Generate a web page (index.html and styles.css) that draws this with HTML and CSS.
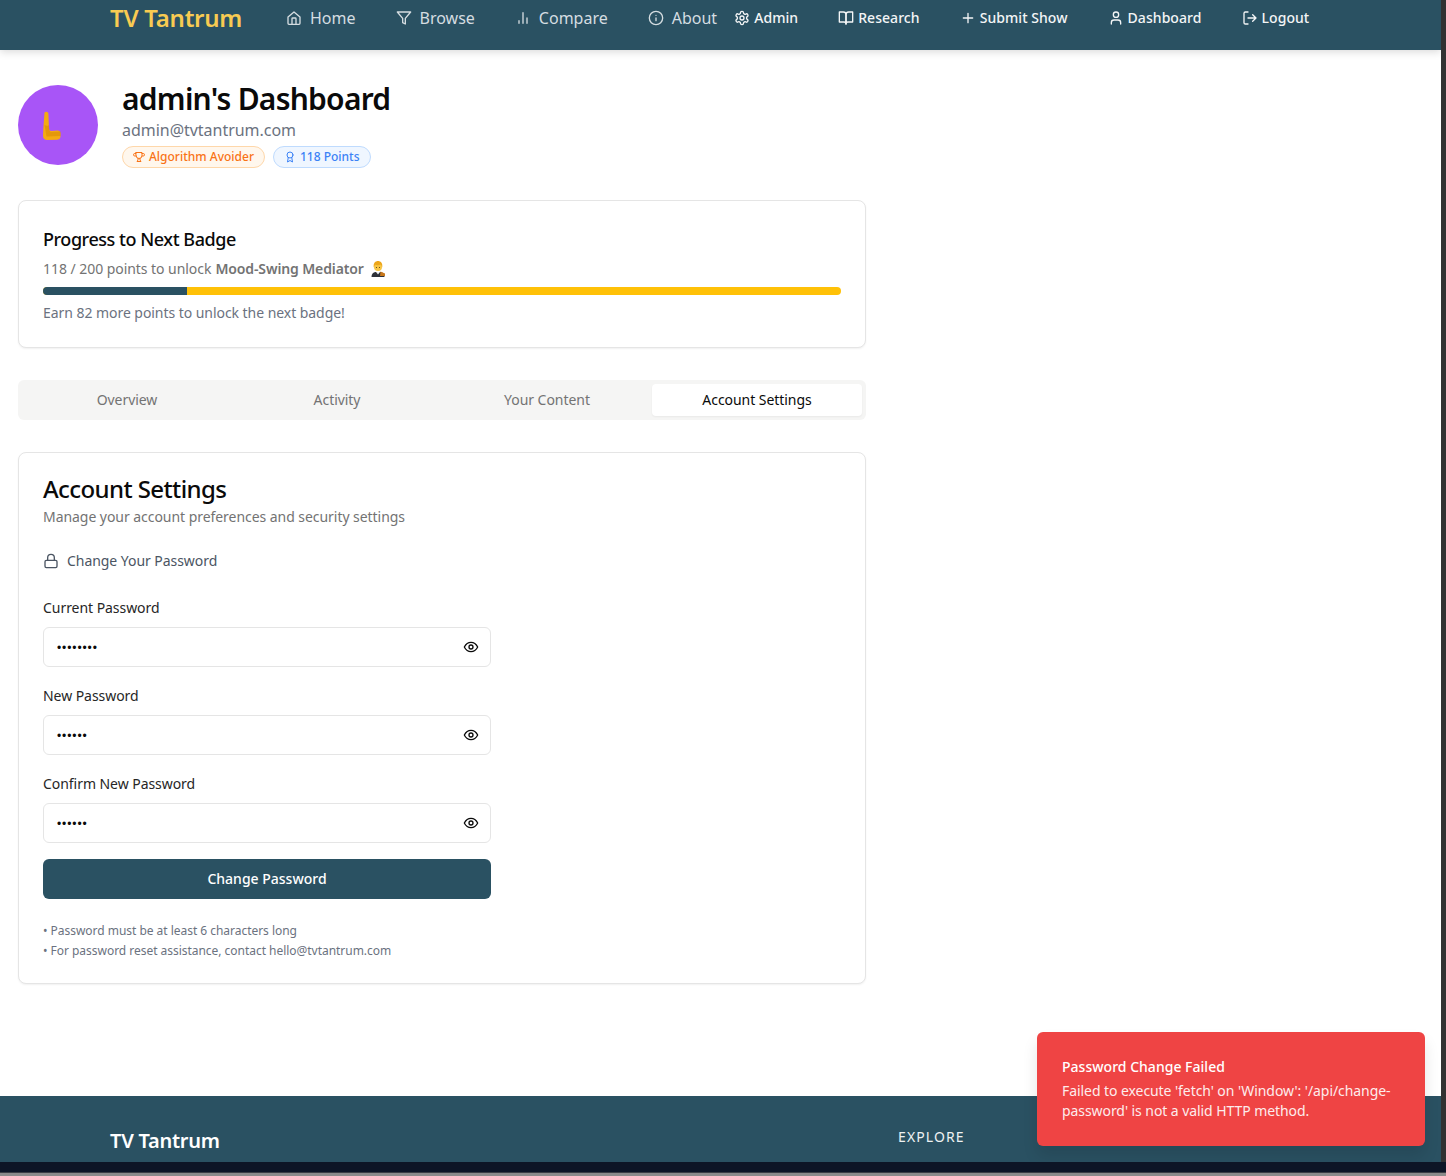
FILE: index.html
```html
<!DOCTYPE html>
<html lang="en">
<head>
  <meta charset="UTF-8">
  <title>TV Tantrum - Dashboard</title>
  <link rel="stylesheet" href="styles.css">
</head>
<body>
  <div class="screen">
    <div class="window-row">
      <div class="page">
        <!-- Top nav -->
        <nav class="navbar">
          <a class="logo">TV Tantrum</a>
          <div class="nav-main">
            <a class="nav-link"><svg class="icon" viewBox="0 0 24 24"><path d="M3 10.5 12 3l9 7.5V20a1.5 1.5 0 0 1-1.5 1.5h-15A1.5 1.5 0 0 1 3 20z"/><path d="M9 21.5V13a1 1 0 0 1 1-1h4a1 1 0 0 1 1 1v8.5"/></svg>Home</a>
            <a class="nav-link"><svg class="icon" viewBox="0 0 24 24"><path d="M22 3H2l8 9.5V19l4 2v-8.5z"/></svg>Browse</a>
            <a class="nav-link"><svg class="icon" viewBox="0 0 24 24"><path d="M12 20V4M18 20v-8M6 20v-4"/></svg>Compare</a>
            <a class="nav-link"><svg class="icon" viewBox="0 0 24 24"><circle cx="12" cy="12" r="10"/><path d="M12 16v-4M12 8h.01"/></svg>About</a>
          </div>
          <div class="nav-side">
            <a class="side-link"><svg class="icon" viewBox="0 0 24 24"><path d="M12.22 2h-.44a2 2 0 0 0-2 2v.18a2 2 0 0 1-1 1.73l-.43.25a2 2 0 0 1-2 0l-.15-.08a2 2 0 0 0-2.73.73l-.22.38a2 2 0 0 0 .73 2.73l.15.1a2 2 0 0 1 1 1.72v.51a2 2 0 0 1-1 1.74l-.15.09a2 2 0 0 0-.73 2.73l.22.38a2 2 0 0 0 2.73.73l.15-.08a2 2 0 0 1 2 0l.43.25a2 2 0 0 1 1 1.73V20a2 2 0 0 0 2 2h.44a2 2 0 0 0 2-2v-.18a2 2 0 0 1 1-1.73l.43-.25a2 2 0 0 1 2 0l.15.08a2 2 0 0 0 2.73-.73l.22-.39a2 2 0 0 0-.73-2.73l-.15-.08a2 2 0 0 1-1-1.74v-.5a2 2 0 0 1 1-1.74l.15-.09a2 2 0 0 0 .73-2.73l-.22-.38a2 2 0 0 0-2.73-.73l-.15.08a2 2 0 0 1-2 0l-.43-.25a2 2 0 0 1-1-1.73V4a2 2 0 0 0-2-2z"/><circle cx="12" cy="12" r="3"/></svg>Admin</a>
            <a class="side-link"><svg class="icon" viewBox="0 0 24 24"><path d="M2 3h6a4 4 0 0 1 4 4v14a3 3 0 0 0-3-3H2z"/><path d="M22 3h-6a4 4 0 0 0-4 4v14a3 3 0 0 1 3-3h7z"/></svg>Research</a>
            <a class="side-link"><svg class="icon" viewBox="0 0 24 24"><path d="M12 5v14M5 12h14"/></svg>Submit Show</a>
            <a class="side-link"><svg class="icon" viewBox="0 0 24 24"><path d="M19 21v-2a4 4 0 0 0-4-4H9a4 4 0 0 0-4 4v2"/><circle cx="12" cy="7" r="4"/></svg>Dashboard</a>
            <a class="side-link"><svg class="icon" viewBox="0 0 24 24"><path d="M9 21H5a2 2 0 0 1-2-2V5a2 2 0 0 1 2-2h4"/><path d="m16 17 5-5-5-5M21 12H9"/></svg>Logout</a>
          </div>
        </nav>

        <main class="content">
          <div class="profile">
            <div class="avatar">
              <svg class="avatar-mark" viewBox="0 0 20 30"><path d="M2.5 1.5c1.500-1.500 3.600-.8 3.900 1l.6 15c.1 1.800 1 2.600 2.700 2.500l5.500-.4c2-.1 3.300 1 3.300 3v3c0 2-1.300 3-3 3.100l-10 .3c-3 .1-4.500-1.500-4.500-4.500l.3-6.500z" fill="#f4ab12"/><path d="M2.500 14c1.500 1 3 1 4.500.2l.2 4.300c.2 2 1.500 2.700 3 2.500l8.300-.5v4.500l-14 .5z" fill="#d98a06" opacity=".6"/></svg>
            </div>
            <div class="profile-info">
              <h1>admin's Dashboard</h1>
              <div class="profile-email">admin@tvtantrum.com</div>
              <div class="badges">
                <span class="badge badge-orange"><svg class="icon" viewBox="0 0 24 24"><path d="M6 3h12v6a6 6 0 0 1-12 0z"/><path d="M6 5H3.500a2.500 2.500 0 0 0 0 5H6M18 5h2.500a2.500 2.500 0 0 1 0 5H18M10 15v3l-2 3h8l-2-3v-3"/></svg>Algorithm Avoider</span>
                <span class="badge badge-blue"><svg class="icon" viewBox="0 0 24 24"><circle cx="12" cy="8" r="6"/><path d="M15.500 13 17 22l-5-3-5 3 1.500-9"/></svg>118 Points</span>
              </div>
            </div>
          </div>

          <section class="card progress-card">
            <h2>Progress to Next Badge</h2>
            <p class="progress-label">118 / 200 points to unlock <strong>Mood-Swing Mediator</strong>
              <svg class="emoji" viewBox="0 0 16 16"><path d="M1.500 16c0-3 1.500-4.500 4-5h5c2.500.5 4 2 4 5z" fill="#2d3038"/><path d="M6 11l2 2.500 2-2.500z" fill="#f3f3f3"/><path d="M10.500 10.500 15 12.500v2.500h-5z" fill="#c9781b"/><circle cx="8" cy="6" r="4" fill="#f7c544"/><path d="M3.800 6.500C3 2 5.500 0 8 0s5 2 4.200 6.500c-.4-1.500-1-2.500-1.700-3-1.500.8-3.500.8-5 .2-.7.500-1.300 1.300-1.700 2.800z" fill="#eda61a"/><path d="M6 6.500h.8M9.200 6.500h.8" stroke="#4a3410" stroke-width="1"/></svg>
            </p>
            <div class="progress-track"><div class="progress-fill" style="width: 18%"></div></div>
            <p class="progress-note">Earn 82 more points to unlock the next badge!</p>
          </section>

          <div class="tabs">
            <div class="tab">Overview</div>
            <div class="tab">Activity</div>
            <div class="tab">Your Content</div>
            <div class="tab tab-active">Account Settings</div>
          </div>

          <section class="card settings-card">
            <h2 class="settings-title">Account Settings</h2>
            <p class="settings-sub">Manage your account preferences and security settings</p>
            <div class="section-head"><svg class="icon" viewBox="0 0 24 24"><rect x="3" y="11" width="18" height="11" rx="2"/><path d="M7 11V7a5 5 0 0 1 10 0v4"/></svg>Change Your Password</div>

            <form class="password-form">
              <label class="field-label">Current Password</label>
              <div class="field">
                <span class="dots">••••••••</span>
                <svg class="icon" viewBox="0 0 24 24"><path d="M2 12s3.500-7 10-7 10 7 10 7-3.500 7-10 7-10-7-10-7z"/><circle cx="12" cy="12" r="3"/></svg>
              </div>
              <label class="field-label">New Password</label>
              <div class="field">
                <span class="dots">••••••</span>
                <svg class="icon" viewBox="0 0 24 24"><path d="M2 12s3.500-7 10-7 10 7 10 7-3.500 7-10 7-10-7-10-7z"/><circle cx="12" cy="12" r="3"/></svg>
              </div>
              <label class="field-label">Confirm New Password</label>
              <div class="field">
                <span class="dots">••••••</span>
                <svg class="icon" viewBox="0 0 24 24"><path d="M2 12s3.500-7 10-7 10 7 10 7-3.500 7-10 7-10-7-10-7z"/><circle cx="12" cy="12" r="3"/></svg>
              </div>
              <button class="submit-btn" type="button">Change Password</button>
            </form>

            <div class="hints">
              <p>• Password must be at least 6 characters long</p>
              <p>• For password reset assistance, contact hello@tvtantrum.com</p>
            </div>
          </section>
        </main>

        <footer class="footer">
          <div class="footer-brand">TV Tantrum</div>
          <div class="footer-heading">EXPLORE</div>
        </footer>

        <!-- Toast sits over the page -->
        <div class="toast">
          <div class="toast-title">Password Change Failed</div>
          <div class="toast-body">Failed to execute 'fetch' on 'Window': '/api/change-password' is not a valid HTTP method.</div>
        </div>
      </div>
      <div class="edge-right"></div>
    </div>
    <div class="edge-bottom"></div>
  </div>
</body>
</html>
```

FILE: styles.css
```css
* {
  box-sizing: border-box;
}

body {
  margin: 0;
  background-color: #ffffff;
  color: #0a0a0a;
  font-family: "Noto Sans", "Open Sans", sans-serif;
  letter-spacing: -0.05px;
}

h1, h2, p {
  margin: 0;
}

.icon {
  width: 16px;
  height: 16px;
  flex: none;
  fill: none;
  stroke: currentColor;
  stroke-width: 2;
  stroke-linecap: round;
  stroke-linejoin: round;
}

.screen {
  display: flex;
  flex-direction: column;
  height: 1176px;
  overflow: hidden;
}

.window-row {
  display: flex;
  flex: 1;
  min-height: 0;
}

.page {
  position: relative;
  flex: 1;
  display: flex;
  flex-direction: column;
  min-width: 0;
  overflow: hidden;
}

.edge-right {
  width: 5px;
  background-color: #323232;
}

.edge-bottom {
  height: 14px;
  background-color: #0d1526;
  border-bottom: 3px solid #8a8a8a;
  box-shadow: inset 0 -1px 0 #3a3d44;
}

/* nav */
.navbar {
  display: flex;
  align-items: center;
  height: 50px;
  padding: 0 0 14px 110px;
  background-color: #2a5162;
  box-shadow: 0 2px 8px rgba(0, 0, 0, 0.15);
  flex: none;
  z-index: 1;
}

.logo {
  width: 176px;
  margin-top: -2px;
  color: #f8cb52;
  font-size: 24px;
  font-weight: 600;
  letter-spacing: -0.25px;
  white-space: nowrap;
}

.nav-main {
  display: flex;
  gap: 40px;
}

.nav-link {
  display: flex;
  align-items: center;
  gap: 8px;
  color: #d5dde1;
  font-size: 16px;
  letter-spacing: 0;
  white-space: nowrap;
}

.nav-side {
  display: flex;
  gap: 40px;
  margin-left: 17px;
  margin-top: -1px;
}

.side-link {
  display: flex;
  align-items: center;
  gap: 4px;
  color: #f3f5f6;
  font-size: 14px;
  font-weight: 500;
  letter-spacing: 0.06px;
  white-space: nowrap;
}

/* main */
.content {
  flex: 1;
  padding: 31px 0 0 18px;
  width: 866px;
}

.profile {
  display: flex;
  align-items: center;
  gap: 24px;
  margin-bottom: 32px;
}

.avatar {
  display: flex;
  align-items: center;
  justify-content: center;
  width: 80px;
  height: 80px;
  border-radius: 50%;
  background-color: #a855f7;
}

.avatar-mark {
  width: 20px;
  height: 30px;
  margin-right: 12px;
  margin-top: 2px;
}

.profile-info h1 {
  font-size: 30px;
  font-weight: 600;
  line-height: 36px;
  letter-spacing: -0.75px;
}

.profile-email {
  margin-top: 1px;
  color: #6b7280;
  font-size: 16px;
  line-height: 24px;
  letter-spacing: -0.03px;
}

.badges {
  display: flex;
  gap: 8px;
  margin-top: 4px;
}

.badge {
  display: flex;
  align-items: center;
  gap: 4px;
  height: 22px;
  padding: 0 10px 1px;
  border: 1px solid;
  border-radius: 11px;
  font-size: 12px;
  font-weight: 500;
  letter-spacing: 0;
}

.badge .icon {
  width: 12px;
  height: 12px;
}

.badge-orange {
  color: #f97316;
  background-color: #fff7ed;
  border-color: #fed7aa;
}

.badge-blue {
  color: #3b82f6;
  background-color: #eff6ff;
  border-color: #bfdbfe;
}

.card {
  background-color: #ffffff;
  border: 1px solid #e5e5e5;
  border-radius: 8px;
  box-shadow: 0 1px 2px rgba(0, 0, 0, 0.06);
}

.progress-card {
  height: 148px;
  padding: 24px;
  margin-bottom: 32px;
}

.progress-card h2 {
  font-size: 18px;
  font-weight: 500;
  line-height: 28px;
  letter-spacing: -0.45px;
}

.progress-label {
  display: flex;
  align-items: center;
  gap: 4px;
  margin-top: 6px;
  color: #737373;
  font-size: 14px;
  line-height: 20px;
}

.progress-label strong {
  font-weight: 600;
  letter-spacing: -0.12px;
  margin-right: 2px;
}

.emoji {
  width: 16px;
  height: 16px;
}

.progress-track {
  height: 8px;
  margin-top: 8px;
  background-color: #ffc107;
  border-radius: 4px;
  overflow: hidden;
}

.progress-fill {
  height: 100%;
  background-color: #2a5162;
}

.progress-note {
  margin-top: 8px;
  color: #6b7280;
  font-size: 14px;
  line-height: 20px;
}

.tabs {
  display: grid;
  grid-template-columns: repeat(4, 1fr);
  height: 40px;
  padding: 4px;
  margin-bottom: 32px;
  background-color: #f5f5f4;
  border-radius: 6px;
}

.tab {
  display: flex;
  align-items: center;
  justify-content: center;
  padding-bottom: 2px;
  color: #737373;
  font-size: 14px;
}

.tab-active {
  color: #0a0a0a;
  background-color: #ffffff;
  border-radius: 4px;
  box-shadow: 0 1px 2px rgba(0, 0, 0, 0.05);
}

.settings-card {
  height: 532px;
  padding: 20px 24px 0;
}

.settings-title {
  font-size: 24px;
  font-weight: 500;
  line-height: 32px;
  letter-spacing: -0.6px;
}

.settings-sub {
  margin-top: 2px;
  color: #737373;
  font-size: 14px;
  line-height: 20px;
}

.section-head {
  display: flex;
  align-items: center;
  gap: 8px;
  margin-top: 24px;
  color: #4b5563;
  font-size: 14px;
  line-height: 20px;
}

.password-form {
  display: flex;
  flex-direction: column;
  width: 448px;
  margin-top: 27px;
}

.field-label {
  color: #262626;
  font-size: 14px;
  line-height: 20px;
  margin-bottom: 9px;
}

.field {
  display: flex;
  align-items: center;
  justify-content: space-between;
  height: 40px;
  padding: 0 11px 0 13px;
  margin-bottom: 19px;
  border: 1px solid #e5e5e5;
  border-radius: 6px;
}

.dots {
  padding-top: 2px;
  font-size: 12px;
  font-family: "Liberation Sans", sans-serif;
  letter-spacing: 0.9px;
}

.submit-btn {
  height: 40px;
  margin-top: -3px;
  padding-bottom: 3px;
  color: #ffffff;
  background-color: #2a5162;
  border: none;
  border-radius: 6px;
  font-family: inherit;
  font-size: 14px;
  font-weight: 500;
}

.hints {
  margin-top: 22px;
  color: #6b7280;
  font-size: 12px;
  line-height: 20px;
  letter-spacing: -0.03px;
}

.footer {
  display: flex;
  flex: none;
  height: 66px;
  padding: 31px 0 0 110px;
  background-color: #2a5162;
  color: #ffffff;
}

.footer-brand {
  width: 788px;
  font-size: 20px;
  font-weight: 600;
  line-height: 28px;
  letter-spacing: -0.25px;
}

.footer-heading {
  margin-top: 1px;
  color: #eef2f3;
  font-size: 14px;
  font-weight: 400;
  letter-spacing: 1.1px;
  line-height: 18px;
}

.toast {
  position: absolute;
  left: 1037px;
  top: 1032px;
  width: 388px;
  height: 114px;
  padding: 24px 25px;
  color: #ffffff;
  background-color: #ef4444;
  border-radius: 6px;
  box-shadow: 0 10px 15px rgba(0, 0, 0, 0.1);
}

.toast-title {
  font-size: 14px;
  font-weight: 500;
  line-height: 22px;
  letter-spacing: 0.02px;
}

.toast-body {
  margin-top: 3px;
  font-size: 14px;
  line-height: 20px;
  letter-spacing: -0.07px;
  opacity: 0.9;
}
```
